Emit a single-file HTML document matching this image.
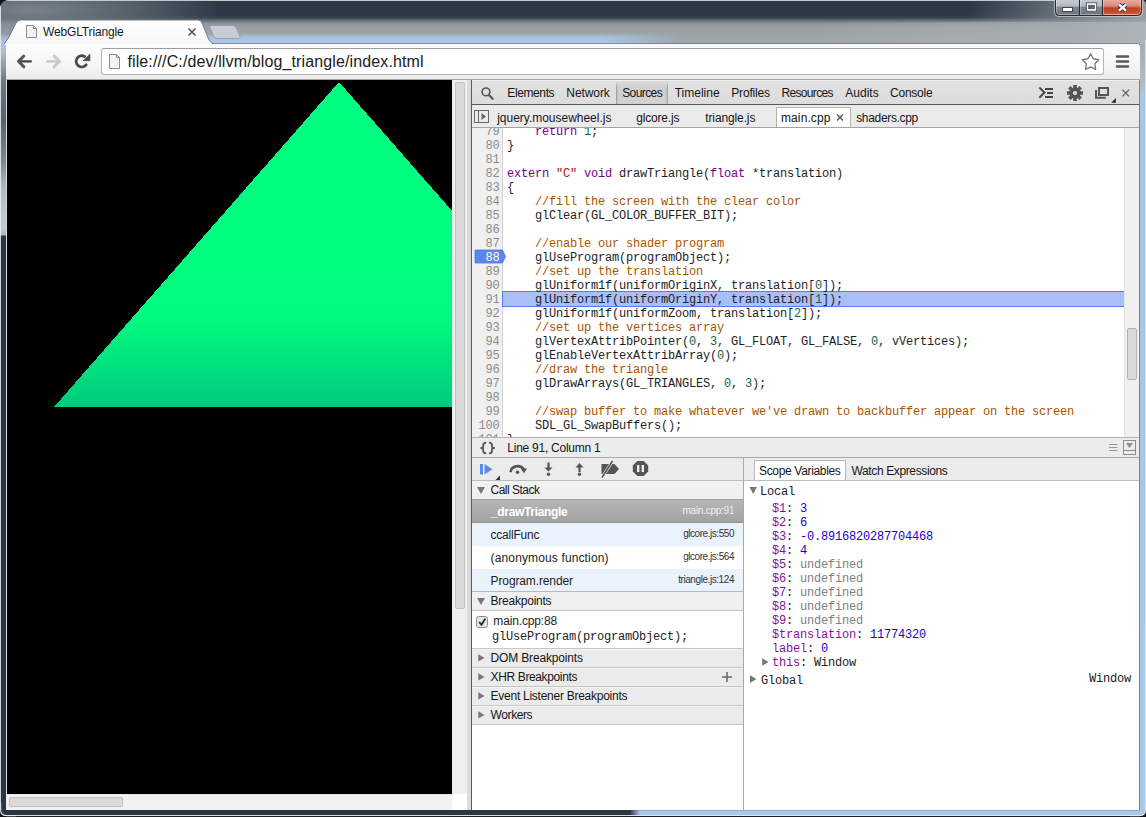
<!DOCTYPE html>
<html><head><meta charset="utf-8">
<style>
*{margin:0;padding:0;box-sizing:border-box}
html,body{width:1146px;height:817px;overflow:hidden;background:#2b3643;position:relative;font-family:"Liberation Sans",sans-serif;font-size:12px;color:#222}
.a{position:absolute}
.mono{font-family:"Liberation Mono",monospace;font-size:11.67px;white-space:pre;line-height:14px}
.m{font-family:'Liberation Mono',monospace;font-size:12px;letter-spacing:-0.2012px;white-space:pre;line-height:normal}
.tx{white-space:pre;line-height:normal;transform-origin:0 0}
.ui{font-family:"Liberation Sans",sans-serif;white-space:pre}
</style></head><body>
<!-- window frame titlebar -->
<div class="a" id="titlebar" style="left:0;top:0;width:1146px;height:46px;background:linear-gradient(to bottom,#5a6570 0,#2e3a47 1px,#2d3946 15px,#3a4551 18px,#6f787f 21px,#8f979c 24px,#9aa1a5 28px,#9ea5a9 36px,#a1a8ac 44px)"></div>
<div class="a" style="left:0;top:0;width:700px;height:46px;background:linear-gradient(to bottom,rgba(169,198,232,0) 0,rgba(169,198,232,0) 33px,rgba(169,198,232,1) 38px,rgba(169,198,232,1) 46px);-webkit-mask-image:linear-gradient(to right,#000 0,#000 600px,transparent 680px)"></div>
<div class="a" style="left:0;top:0;width:260px;height:46px;background:radial-gradient(ellipse 190px 34px at 30px 10px,rgba(125,134,142,0.95),rgba(125,134,142,0.5) 55%,rgba(125,134,142,0) 100%)"></div>
<div class="a" style="left:820px;top:0;width:326px;height:46px;background:linear-gradient(110deg,rgba(140,150,158,0) 0,rgba(140,150,158,0) 45%,rgba(150,158,165,0.75) 80%,rgba(165,172,178,0.9) 100%)"></div>
<div class="a" style="left:820px;top:22px;width:326px;height:24px;background:linear-gradient(to right,rgba(176,182,186,0) 0,rgba(176,182,186,0.8) 100%)"></div>
<div class="a" style="left:3px;top:0;width:1053px;height:1px;background:rgba(215,220,225,0.85)"></div>
<!-- left frame -->
<div class="a" style="left:0;top:44px;width:7px;height:773px;background:linear-gradient(to bottom,#a7c3e1 0,#a9bfd5 8px,#9ea3a8 18px,#6f7984 36px,#56616c 76px,#7b8690 116px,#b4bcc3 146px,#c3cad0 184px,#b0b8bf 191px,#2b3643 192px,#2b3643 773px)"></div>
<div class="a" style="left:0;top:0;width:1px;height:812px;background:rgba(235,238,241,0.85)"></div>
<svg class="a" style="left:0;top:0" width="10" height="10"><path d="M0,0 L8,0 Q1.5,0.5 0,7Z" fill="#0e1116"/></svg>
<!-- right frame -->
<div class="a" style="left:1139px;top:44px;width:7px;height:773px;background:linear-gradient(to bottom,#a6adb1 0,#b3b9bd 36px,#abc6e4 52px,#a9c8ec 773px)"></div>
<div class="a" style="left:1139px;top:44px;width:1px;height:766px;background:#6f8296"></div>
<!-- bottom frame -->
<div class="a" style="left:0;top:810px;width:1146px;height:7px;background:linear-gradient(to right,#2b3643 0,#2b3643 630px,#a9c8ec 640px,#a9c8ec 1146px)"></div>
<div class="a" style="left:0;top:815px;width:1146px;height:1px;background:rgba(225,230,235,0.95)"></div>
<div class="a" style="left:0;top:816px;width:1146px;height:1px;background:#1a1f26"></div>
<div class="a" style="left:1145px;top:40px;width:1px;height:770px;background:rgba(220,232,245,0.9)"></div>
<div class="a" style="left:632px;top:810px;width:508px;height:1px;background:rgba(110,130,150,0.45)"></div>
<svg class="a" style="left:1130px;top:803px" width="16" height="14"><path d="M16,0 L16,14 L0,14 L0,13.3 L9,13.3 Q15.3,13.3 15.3,7 L15.3,0Z" fill="#0e1116"/><path d="M15.4,0 L15.4,7 Q15.4,12.6 9,12.6 L0,12.6" fill="none" stroke="rgba(225,232,240,0.95)" stroke-width="1.2"/></svg>
<svg class="a" style="left:0;top:803px" width="16" height="14"><path d="M0,0 L0,14 L16,14 L16,13.3 L7,13.3 Q0.7,13.3 0.7,7 L0.7,0Z" fill="#0e1116"/><path d="M0.6,0 L0.6,7 Q0.6,12.6 7,12.6 L16,12.6" fill="none" stroke="rgba(225,230,235,0.95)" stroke-width="1.2"/></svg>

<!-- tab -->
<svg class="a" style="left:0;top:0" width="260" height="46">
  <defs><linearGradient id="tabg" x1="0" y1="0" x2="0" y2="1"><stop offset="0" stop-color="#ffffff"/><stop offset="1" stop-color="#f7f7f7"/></linearGradient></defs>
  <path d="M4,45 L6,41 Q8,39 9,37 L16,23 Q18,20 21,20 L198,20 Q201,20 202,23 L209,40 Q211,43 214,45 Z" fill="url(#tabg)"/>
  <path d="M4,44.5 L6,41 Q8,39 9,37 L16,23 Q18,20 21,20 L198,20 Q201,20 202,23 L209,40 Q211,43 214,44.5" fill="none" stroke="#5b6670" stroke-width="0.8"/>
  <path d="M210,25.5 L233,25.5 Q235,25.5 236,27.5 L240,36.5 Q240.5,38.5 238.5,38.5 L216,38.5 Q214.5,38.5 214,37 L210,27.5 Q209.5,25.5 210,25.5Z" fill="#c7cdd4" stroke="#8894a0" stroke-width="0.7"/>
  <!-- page icon -->
  <path d="M26.5,25.5 L33.5,25.5 L36.5,28.5 L36.5,37.5 L26.5,37.5 Z" fill="#f2f2f2" stroke="#8a8a8a" stroke-width="1"/>
  <path d="M33.5,25.5 L33.5,28.5 L36.5,28.5" fill="none" stroke="#8a8a8a" stroke-width="1"/>
  <!-- close x -->
  <path d="M188.5,28.5 L195.5,35.5 M195.5,28.5 L188.5,35.5" stroke="#505050" stroke-width="1.5"/>
</svg>

<!-- caption buttons -->
<svg class="a" style="left:1050px;top:0" width="96" height="20">
  <defs>
    <linearGradient id="cbg" x1="0" y1="0" x2="0" y2="1"><stop offset="0" stop-color="#c9ced3"/><stop offset="0.42" stop-color="#b4bac0"/><stop offset="0.5" stop-color="#7d8690"/><stop offset="1" stop-color="#6d7680"/></linearGradient>
    <linearGradient id="crg" x1="0" y1="0" x2="0" y2="1"><stop offset="0" stop-color="#e9b0a4"/><stop offset="0.42" stop-color="#d98b7a"/><stop offset="0.55" stop-color="#c4401f"/><stop offset="0.85" stop-color="#c8502f"/><stop offset="1" stop-color="#df8a70"/></linearGradient>
  </defs>
  <path d="M4.5,-1 L4.5,12 Q4.5,16.5 9,16.5 L88,16.5 Q92.5,16.5 92.5,12 L92.5,-1" fill="none" stroke="rgba(255,255,255,0.45)" stroke-width="1"/>
  <path d="M5.5,-1 L5.5,11.5 Q5.5,15.5 9.5,15.5 L29.5,15.5 L29.5,-1Z" fill="url(#cbg)"/>
  <path d="M29.5,-1 L29.5,15.5 L52.5,15.5 L52.5,-1Z" fill="url(#cbg)"/>
  <path d="M52.5,-1 L52.5,15.5 L87.5,15.5 Q91.5,15.5 91.5,11.5 L91.5,-1Z" fill="url(#crg)"/>
  <path d="M6.5,-1 L6.5,11.5 Q6.5,14.5 9.5,14.5 L28.5,14.5 M30.5,14.5 L51.5,14.5 M53.5,14.5 L87.5,14.5 Q90.5,14.5 90.5,11.5 L90.5,-1 M30.5,-1 L30.5,14.5 M53.5,-1 L53.5,14.5" fill="none" stroke="rgba(255,255,255,0.35)" stroke-width="1"/>
  <path d="M5.5,-1 L5.5,11.5 Q5.5,15.5 9.5,15.5 L87.5,15.5 Q91.5,15.5 91.5,11.5 L91.5,-1 M29.5,0 L29.5,15.5 M52.5,0 L52.5,15.5" fill="none" stroke="#262b31" stroke-width="1"/>
  <rect x="12.5" y="7.5" width="10" height="4" fill="#fff" stroke="#3e4650" stroke-width="1"/>
  <rect x="36.3" y="2.8" width="10.4" height="8.4" fill="#fff" stroke="#3e4650" stroke-width="0.8"/>
  <rect x="38.6" y="5.2" width="5.8" height="3.6" fill="#5b6470" stroke="#3e4650" stroke-width="0.6"/>
  <path d="M69,4.6 L76,10.6 M76,4.6 L69,10.6" stroke="#3b3a40" stroke-width="4.4" stroke-linecap="butt"/>
  <path d="M69,4.6 L76,10.6 M76,4.6 L69,10.6" stroke="#fff" stroke-width="2.4" stroke-linecap="butt"/>
  <path d="M92,0 Q96,0 96,5 L96,0Z" fill="#111"/>
</svg>
<!-- toolbar -->
<div class="a" style="left:212px;top:43px;width:926px;height:1px;background:rgba(85,100,115,0.55)"></div>
<div class="a" style="left:6px;top:44px;width:1134px;height:36px;border-radius:3px 3px 0 0;background:linear-gradient(to bottom,#fdfdfd 0,#f6f6f6 20px,#ebebeb 35px);border-bottom:1px solid #a7a7a7"></div>
<!-- omnibox -->
<div class="a" style="left:101px;top:48px;width:1003px;height:27px;border-radius:3px;background:#fff;border:1px solid #b4b4b4;border-top-color:#9c9c9c"></div>
<svg class="a" style="left:0;top:44px" width="140" height="36">
  <!-- back -->
  <path d="M18.8,17.4 L30.8,17.4" stroke="#444" stroke-width="2.3" stroke-linecap="round"/>
  <path d="M23.8,12 L18.6,17.4 L23.8,22.8" fill="none" stroke="#555" stroke-width="3" stroke-linecap="round" stroke-linejoin="round"/>
  <!-- forward -->
  <path d="M47.2,17.4 L59,17.4" stroke="#c6c6c6" stroke-width="2.3" stroke-linecap="round"/>
  <path d="M54.2,12 L59.4,17.4 L54.2,22.8" fill="none" stroke="#cacaca" stroke-width="3" stroke-linecap="round" stroke-linejoin="round"/>
  <!-- reload -->
  <path d="M86.1,20.9 A5.6,5.6 0 1 1 84.6,12.45" fill="none" stroke="#4a4a4a" stroke-width="2.9" stroke-linecap="round"/>
  <path d="M90,10 L90,16.7 L83,16.7 Z" fill="#4a4a4a" stroke="#4a4a4a" stroke-width="0.6" stroke-linejoin="round"/>
  <!-- page icon -->
  <path d="M109.5,10.5 L116.5,10.5 L119.5,13.5 L119.5,24.5 L109.5,24.5 Z" fill="#f4f4f4" stroke="#8c8c8c" stroke-width="1"/>
  <path d="M116.5,10.5 L116.5,13.5 L119.5,13.5" fill="none" stroke="#8c8c8c" stroke-width="1"/>
</svg>
<svg class="a" style="left:1075px;top:48px" width="64" height="28">
  <path d="M15.60,5.80 L18.25,10.76 L23.78,11.74 L19.88,15.79 L20.65,21.36 L15.60,18.90 L10.55,21.36 L11.32,15.79 L7.42,11.74 L12.95,10.76Z" fill="#fff" stroke="#7a7a7a" stroke-width="1.35" stroke-linejoin="round"/>
  <path d="M42,8.5 L53,8.5 M42,13.5 L53,13.5 M42,18.5 L53,18.5" stroke="#5a5a5a" stroke-width="2.6" stroke-linecap="round"/>
</svg>

<!-- page content -->
<div class="a" style="left:6px;top:80px;width:1px;height:714px;background:#d6dadd"></div>
<div class="a" style="left:7px;top:80px;width:445px;height:714px;background:#000"></div>
<svg class="a" style="left:7px;top:80px" width="445" height="714">
  <defs><linearGradient id="trg" gradientUnits="userSpaceOnUse" x1="0" y1="0" x2="0" y2="327"><stop offset="0" stop-color="#00ff80"/><stop offset="0.72" stop-color="#00fd7f"/><stop offset="1" stop-color="#00ca7c"/></linearGradient></defs>
  <path d="M332,2 L617,327 L47,327 Z" fill="url(#trg)" shape-rendering="crispEdges"/>
</svg>
<!-- page scrollbars -->
<div class="a" style="left:452px;top:80px;width:15px;height:714px;background:#f0f0f0;border-left:1px solid #e6e6e6"></div>
<div class="a" style="left:455px;top:82px;width:10px;height:527px;background:#dadada;border:1px solid #c2c2c2;border-radius:2px"></div>
<div class="a" style="left:6px;top:794px;width:446px;height:16px;background:#f1f1f1;border-top:1px solid #e6e6e6"></div>
<div class="a" style="left:9px;top:797px;width:114px;height:10px;background:#dadada;border:1px solid #c2c2c2;border-radius:2px"></div>
<div class="a" style="left:452px;top:794px;width:15px;height:16px;background:#fff"></div>
<div class="a" style="left:467px;top:80px;width:4px;height:730px;background:#dcdcdc"></div>
<div class="a" style="left:471px;top:80px;width:1px;height:730px;background:#5a5a5a"></div>

<!-- devtools -->
<div class="a" style="left:472px;top:80px;width:667px;height:730px;background:#fff"></div>
<!-- DT toolbar -->
<div class="a" style="left:472px;top:80px;width:667px;height:25px;background:linear-gradient(#f0f0f0 0,#f0f0f0 1px,#e1e1e1 1px,#dcdcdc 24px);border-bottom:1px solid #575757"></div>
<div class="a" style="left:616px;top:81px;width:52px;height:23px;background:linear-gradient(#d6d6d6,#cfcfcf 50%,#d3d3d3);-webkit-mask-image:linear-gradient(rgba(0,0,0,.6),#000 4px)"></div>
<div class="a" style="left:616px;top:82px;width:52px;height:22px;box-shadow:inset 1px 0 1px rgba(0,0,0,0.18),inset -1px 0 1px rgba(0,0,0,0.18),inset 3px 0 3px -2px rgba(0,0,0,0.12),inset -3px 0 3px -2px rgba(0,0,0,0.12);-webkit-mask-image:linear-gradient(transparent,#000 5px)"></div>
<svg class="a" style="left:472px;top:80px" width="667" height="25">
  <circle cx="14" cy="11.9" r="3.9" fill="none" stroke="#555" stroke-width="1.6"/>
  <path d="M16.9,14.9 L20.6,18.8" stroke="#555" stroke-width="2.2" stroke-linecap="round"/>
  <!-- console drawer >= -->
  <path d="M567.3,7.5 L572.5,12.5 L567.3,17.8" fill="none" stroke="#4a4a4a" stroke-width="2" stroke-linejoin="miter"/>
  <path d="M573,9 L581,9 M575,13 L581,13 M573,17 L581,17" stroke="#444" stroke-width="1.8"/>
  <!-- gear -->
  <g transform="translate(603,13)">
    <circle r="5.6" fill="#555"/>
    <g fill="#555">
      <rect x="-1.8" y="-8" width="3.6" height="16" />
      <rect x="-1.8" y="-8" width="3.6" height="16" transform="rotate(45)"/>
      <rect x="-1.8" y="-8" width="3.6" height="16" transform="rotate(90)"/>
      <rect x="-1.8" y="-8" width="3.6" height="16" transform="rotate(135)"/>
    </g>
    <circle r="2.1" fill="#dfdfdf"/>
  </g>
  <!-- dock icon -->
  <rect x="627" y="8" width="9" height="7" fill="none" stroke="#555" stroke-width="2"/>
  <path d="M624,10 L624,17.75 L633.8,17.75" fill="none" stroke="#555" stroke-width="2"/>
  <path d="M639.2,22.7 L643.9,18 L643.9,22.7 Z" fill="#222"/>
  <!-- close -->
  <path d="M650.5,9.8 L657,16.4 M657,9.8 L650.5,16.4" stroke="#666" stroke-width="1.3"/>
</svg>
<!-- source tabs row -->
<div class="a" style="left:472px;top:105px;width:667px;height:23px;background:#ebebeb;border-bottom:1px solid #a3a3a3"></div>
<div class="a" style="left:776px;top:107px;width:75px;height:20px;background:#fff;border:1px solid #b4b4b4;border-bottom:none"></div>
<svg class="a" style="left:472px;top:105px" width="400" height="23">
  <rect x="2.5" y="5.5" width="14" height="12" fill="none" stroke="#666" stroke-width="1"/>
  <path d="M6.5,5.5 L6.5,17.5" stroke="#666" stroke-width="1"/>
  <path d="M9.5,8 L14,11.5 L9.5,15 Z" fill="#666"/>
  <path d="M365,9.4 L371,15.4 M371,9.4 L365,15.4" stroke="#555" stroke-width="1.4"/>
</svg>
<!-- code area -->
<div class="a" style="left:472px;top:128px;width:31px;height:309px;background:#f0f0f0;border-right:1px solid #d2d2d2"></div>
<!-- breakpoint marker line 88 -->
<svg class="a" style="left:472px;top:248px" width="40" height="18">
  <path d="M3,2 L30.5,2 L33.5,8.5 L30.5,15 L3,15 Z" fill="#5b86ee" stroke="#4a78e6" stroke-width="0.8"/>
</svg>
<!-- highlight line 91 -->
<div class="a" style="left:502px;top:291px;width:622px;height:16px;background:#aabff8;border:1px solid #4f7ee8;border-right:none"></div>
<!-- code scrollbar -->
<div class="a" style="left:1124px;top:128px;width:15px;height:309px;background:#f0f0f0;border-left:1px solid #e4e4e4"></div>
<div class="a" style="left:1127px;top:328px;width:10px;height:52px;background:#d9d9d9;border:1px solid #b4b4b4;border-radius:2px"></div>
<!-- status bar -->
<div class="a" style="left:472px;top:437px;width:667px;height:21px;background:#ececec;border-top:1px solid #b3b3b3;border-bottom:1px solid #a9a9a9"></div>
<svg class="a" style="left:472px;top:437px" width="667" height="21">
  <path d="M14.2,5.6 Q11.2,5.6 11.2,8.2 L11.2,9.6 Q11.2,11 8.4,11 Q11.2,11 11.2,12.4 L11.2,13.8 Q11.2,16.4 14.2,16.4 M17,5.6 Q20,5.6 20,8.2 L20,9.6 Q20,11 22.8,11 Q20,11 20,12.4 L20,13.8 Q20,16.4 17,16.4" fill="none" stroke="#555" stroke-width="1.8"/>
  <path d="M637,7.5 L645.5,7.5 M637,10.5 L645.5,10.5 M637,13.5 L645.5,13.5" stroke="#999" stroke-width="1.1"/>
  <rect x="651.5" y="3.5" width="12" height="14" fill="none" stroke="#8c8c8c" stroke-width="1"/>
  <path d="M651.5,13.5 L663.5,13.5" stroke="#8c8c8c" stroke-width="1"/>
  <path d="M654,6 L661,6 L657.5,11 Z" fill="#8c8c8c"/>
</svg>
<!-- debug toolbar + right tabs -->
<div class="a" style="left:472px;top:458px;width:667px;height:23px;background:#ebebeb;border-bottom:1px solid #bdbdbd"></div>
<div class="a" style="left:743px;top:458px;width:1px;height:352px;background:#a8a8a8"></div>
<svg class="a" style="left:472px;top:458px" width="272" height="23">
  <!-- resume -->
  <rect x="8" y="6" width="3" height="10.5" fill="#5a8ce8"/>
  <path d="M12.5,6 L20.5,11.2 L12.5,16.5 Z" fill="#5a8ce8"/>
  <path d="M23.5,22 L28,17.5 L28,22 Z" fill="#333"/>
  <!-- step over -->
  <path d="M38.6,14.2 A7,6.2 0 0 1 51.6,11.2" fill="none" stroke="#555" stroke-width="2.6"/>
  <path d="M48.6,10.6 L55,10.6 L52,15.2 Z" fill="#555"/>
  <circle cx="45.5" cy="14.3" r="1.8" fill="#555"/>
  <!-- step into -->
  <path d="M76.5,4.5 L76.5,11" stroke="#555" stroke-width="2.2"/>
  <path d="M72.5,9.5 L80.5,9.5 L76.5,13.5 Z" fill="#555"/>
  <circle cx="76.5" cy="16.3" r="1.7" fill="#555"/>
  <!-- step out -->
  <path d="M107.5,9 L107.5,14" stroke="#555" stroke-width="2.2"/>
  <path d="M103.5,9.5 L111.5,9.5 L107.5,5 Z" fill="#555"/>
  <circle cx="107.5" cy="16.3" r="1.7" fill="#555"/>
  <!-- deactivate -->
  <path d="M129.5,6 L142.5,6 L147,11 L142.5,16 L129.5,16 Z" fill="#555"/>
  <path d="M129.5,20 L141,2.5" stroke="#ebebeb" stroke-width="3"/>
  <path d="M130,19.5 L140.5,3" stroke="#555" stroke-width="1.6"/>
  <!-- pause on exceptions -->
  <path d="M165.3,3 L171.7,3 L176.2,7.5 L176.2,13.5 L171.7,18 L165.3,18 L160.8,13.5 L160.8,7.5 Z" fill="#555"/>
  <rect x="165" y="7" width="2.4" height="7" fill="#ebebeb"/>
  <rect x="169.6" y="7" width="2.4" height="7" fill="#ebebeb"/>
</svg>
<!-- scope tab -->
<div class="a" style="left:754px;top:460px;width:92px;height:20px;background:#fff;border:1px solid #b8b8b8;border-bottom:none"></div>
<!-- call stack -->
<div class="a" style="left:472px;top:481px;width:271px;height:18px;background:linear-gradient(#f2f2f2,#eeeeee)"></div>
<div class="a" style="left:472px;top:499px;width:271px;height:24px;background:linear-gradient(#b6b6b6,#a2a2a2);border-top:1px solid #9e9e9e;border-bottom:1px solid #969696"></div>
<div class="a" style="left:472px;top:523px;width:271px;height:23px;background:#eaf2fd"></div>
<div class="a" style="left:472px;top:546px;width:271px;height:23px;background:#fff"></div>
<div class="a" style="left:472px;top:569px;width:271px;height:22px;background:#eaf2fd"></div>
<!-- breakpoints -->
<div class="a" style="left:472px;top:591px;width:271px;height:20px;background:#f0f0f0;border-top:1px solid #b9b9b9;border-bottom:1px solid #c4c4c4"></div>
<div class="a" style="left:472px;top:648px;width:271px;height:77px;background:repeating-linear-gradient(#c6c6c6 0,#c6c6c6 1px,#f4f4f4 1px,#f4f4f4 2px,#ebebeb 2px,#ebebeb 19px)"></div>
<svg class="a" style="left:472px;top:480px" width="272" height="260">
  <path d="M5,7 L13,7 L9,14 Z" fill="#777"/>
  <path d="M5,118 L13,118 L9,125 Z" fill="#777"/>
  <rect x="4.5" y="136.5" width="11" height="11" rx="2" fill="#e4e4e4" stroke="#8e8e8e" stroke-width="1"/>
  <path d="M7.2,142 L9.5,144.8 L13.3,138.6" fill="none" stroke="#222" stroke-width="1.7"/>
  <path d="M6.3,174.3 L12.5,177.9 L6.3,181.5 Z" fill="#777"/>
  <path d="M6.3,193.3 L12.5,196.9 L6.3,200.5 Z" fill="#777"/>
  <path d="M6.3,212.3 L12.5,215.9 L6.3,219.5 Z" fill="#777"/>
  <path d="M6.3,231.3 L12.5,234.9 L6.3,238.5 Z" fill="#777"/>
  <path d="M255,192 L255,202 M250,197 L260,197" stroke="#666" stroke-width="1.5"/>
</svg>
<!-- scope triangles -->
<svg class="a" style="left:744px;top:480px" width="30" height="210">
  <path d="M5.5,7 L13,7 L9.2,14 Z" fill="#777"/>
  <path d="M18.2,178.2 L24.5,182 L18.2,185.8 Z" fill="#777"/>
  <path d="M6,195.3 L12.5,199.1 L6,202.9 Z" fill="#777"/>
</svg>

<!-- code -->
<div class="a" style="left:472px;top:128px;width:652px;height:309px;overflow:hidden">
<div class="a m" style="left:13.5px;top:-3px;color:#8c8c8c">79</div>
<div class="a m" style="left:35px;top:-3px;color:#1e1e1e">    <span style="color:#770088">return</span> <span style="color:#116644">1</span>;</div>
<div class="a m" style="left:13.5px;top:11px;color:#8c8c8c">80</div>
<div class="a m" style="left:35px;top:11px;color:#1e1e1e">}</div>
<div class="a m" style="left:13.5px;top:25px;color:#8c8c8c">81</div>
<div class="a m" style="left:13.5px;top:39px;color:#8c8c8c">82</div>
<div class="a m" style="left:35px;top:39px;color:#1e1e1e"><span style="color:#770088">extern</span> <span style="color:#aa1111">&quot;C&quot;</span> <span style="color:#770088">void</span> drawTriangle(<span style="color:#770088">float</span> *translation)</div>
<div class="a m" style="left:13.5px;top:53px;color:#8c8c8c">83</div>
<div class="a m" style="left:35px;top:53px;color:#1e1e1e">{</div>
<div class="a m" style="left:13.5px;top:67px;color:#8c8c8c">84</div>
<div class="a m" style="left:35px;top:67px;color:#1e1e1e"><span style="color:#aa5500">    //fill the screen with the clear color</span></div>
<div class="a m" style="left:13.5px;top:81px;color:#8c8c8c">85</div>
<div class="a m" style="left:35px;top:81px;color:#1e1e1e">    glClear(GL_COLOR_BUFFER_BIT);</div>
<div class="a m" style="left:13.5px;top:95px;color:#8c8c8c">86</div>
<div class="a m" style="left:13.5px;top:109px;color:#8c8c8c">87</div>
<div class="a m" style="left:35px;top:109px;color:#1e1e1e"><span style="color:#aa5500">    //enable our shader program</span></div>
<div class="a m" style="left:13.5px;top:123px;color:#fff">88</div>
<div class="a m" style="left:35px;top:123px;color:#1e1e1e">    glUseProgram(programObject);</div>
<div class="a m" style="left:13.5px;top:137px;color:#8c8c8c">89</div>
<div class="a m" style="left:35px;top:137px;color:#1e1e1e"><span style="color:#aa5500">    //set up the translation</span></div>
<div class="a m" style="left:13.5px;top:151px;color:#8c8c8c">90</div>
<div class="a m" style="left:35px;top:151px;color:#1e1e1e">    glUniform1f(uniformOriginX, translation[<span style="color:#116644">0</span>]);</div>
<div class="a m" style="left:13.5px;top:165px;color:#8c8c8c">91</div>
<div class="a m" style="left:35px;top:165px;color:#1e1e1e">    glUniform1f(uniformOriginY, translation[<span style="color:#116644">1</span>]);</div>
<div class="a m" style="left:13.5px;top:179px;color:#8c8c8c">92</div>
<div class="a m" style="left:35px;top:179px;color:#1e1e1e">    glUniform1f(uniformZoom, translation[<span style="color:#116644">2</span>]);</div>
<div class="a m" style="left:13.5px;top:193px;color:#8c8c8c">93</div>
<div class="a m" style="left:35px;top:193px;color:#1e1e1e"><span style="color:#aa5500">    //set up the vertices array</span></div>
<div class="a m" style="left:13.5px;top:207px;color:#8c8c8c">94</div>
<div class="a m" style="left:35px;top:207px;color:#1e1e1e">    glVertexAttribPointer(<span style="color:#116644">0</span>, <span style="color:#116644">3</span>, GL_FLOAT, GL_FALSE, <span style="color:#116644">0</span>, vVertices);</div>
<div class="a m" style="left:13.5px;top:221px;color:#8c8c8c">95</div>
<div class="a m" style="left:35px;top:221px;color:#1e1e1e">    glEnableVertexAttribArray(<span style="color:#116644">0</span>);</div>
<div class="a m" style="left:13.5px;top:235px;color:#8c8c8c">96</div>
<div class="a m" style="left:35px;top:235px;color:#1e1e1e"><span style="color:#aa5500">    //draw the triangle</span></div>
<div class="a m" style="left:13.5px;top:249px;color:#8c8c8c">97</div>
<div class="a m" style="left:35px;top:249px;color:#1e1e1e">    glDrawArrays(GL_TRIANGLES, <span style="color:#116644">0</span>, <span style="color:#116644">3</span>);</div>
<div class="a m" style="left:13.5px;top:263px;color:#8c8c8c">98</div>
<div class="a m" style="left:13.5px;top:277px;color:#8c8c8c">99</div>
<div class="a m" style="left:35px;top:277px;color:#1e1e1e"><span style="color:#aa5500">    //swap buffer to make whatever we&#x27;ve drawn to backbuffer appear on the screen</span></div>
<div class="a m" style="left:6.5px;top:291px;color:#8c8c8c">100</div>
<div class="a m" style="left:35px;top:291px;color:#1e1e1e">    SDL_GL_SwapBuffers();</div>
<div class="a m" style="left:6.5px;top:305px;color:#8c8c8c">101</div>
<div class="a m" style="left:35px;top:305px;color:#1e1e1e">}</div>
</div>
<!-- scope -->
<div class="a m" style="left:772px;top:502px"><span style="color:#881391">$1</span><span style="color:#222">: </span><span style="color:#1c00cf">3</span></div>
<div class="a m" style="left:772px;top:516px"><span style="color:#881391">$2</span><span style="color:#222">: </span><span style="color:#1c00cf">6</span></div>
<div class="a m" style="left:772px;top:530px"><span style="color:#881391">$3</span><span style="color:#222">: </span><span style="color:#1c00cf">-0.8916820287704468</span></div>
<div class="a m" style="left:772px;top:544px"><span style="color:#881391">$4</span><span style="color:#222">: </span><span style="color:#1c00cf">4</span></div>
<div class="a m" style="left:772px;top:558px"><span style="color:#881391">$5</span><span style="color:#222">: </span><span style="color:#808080">undefined</span></div>
<div class="a m" style="left:772px;top:572px"><span style="color:#881391">$6</span><span style="color:#222">: </span><span style="color:#808080">undefined</span></div>
<div class="a m" style="left:772px;top:586px"><span style="color:#881391">$7</span><span style="color:#222">: </span><span style="color:#808080">undefined</span></div>
<div class="a m" style="left:772px;top:600px"><span style="color:#881391">$8</span><span style="color:#222">: </span><span style="color:#808080">undefined</span></div>
<div class="a m" style="left:772px;top:614px"><span style="color:#881391">$9</span><span style="color:#222">: </span><span style="color:#808080">undefined</span></div>
<div class="a m" style="left:772px;top:628px"><span style="color:#881391">$translation</span><span style="color:#222">: </span><span style="color:#1c00cf">11774320</span></div>
<div class="a m" style="left:772px;top:642px"><span style="color:#881391">label</span><span style="color:#222">: </span><span style="color:#1c00cf">0</span></div>
<div class="a m" style="left:772px;top:656px"><span style="color:#881391">this</span><span style="color:#222">: Window</span></div>
<div class="a m" style="left:761px;top:674px;color:#222">Global</div>
<div class="a m" style="left:1089px;top:672px;color:#222">Window</div>
<!-- texts -->
<div class="a tx" style="left:43.00px;top:24.5px;font-family:'Liberation Sans';font-size:12px;font-weight:400;color:#1a1a1a;letter-spacing:-0.151px;">WebGLTriangle</div>
<div class="a tx" style="left:127.40px;top:53px;font-family:'Liberation Sans';font-size:16px;font-weight:400;color:#202020;letter-spacing:0.125px;">file:///C:/dev/llvm/blog_triangle/index.html</div>
<div class="a tx" style="left:507.30px;top:86px;font-family:'Liberation Sans';font-size:12px;font-weight:400;color:#161616;letter-spacing:-0.389px;">Elements</div>
<div class="a tx" style="left:566.30px;top:86px;font-family:'Liberation Sans';font-size:12px;font-weight:400;color:#161616;letter-spacing:-0.085px;">Network</div>
<div class="a tx" style="left:622.20px;top:86px;font-family:'Liberation Sans';font-size:12px;font-weight:400;color:#161616;letter-spacing:-0.587px;">Sources</div>
<div class="a tx" style="left:674.70px;top:86px;font-family:'Liberation Sans';font-size:12px;font-weight:400;color:#161616;">Timeline</div>
<div class="a tx" style="left:731.30px;top:86px;font-family:'Liberation Sans';font-size:12px;font-weight:400;color:#161616;letter-spacing:-0.188px;">Profiles</div>
<div class="a tx" style="left:781.40px;top:86px;font-family:'Liberation Sans';font-size:12px;font-weight:400;color:#161616;letter-spacing:-0.657px;">Resources</div>
<div class="a tx" style="left:845.20px;top:86px;font-family:'Liberation Sans';font-size:12px;font-weight:400;color:#161616;letter-spacing:0.030px;">Audits</div>
<div class="a tx" style="left:890.00px;top:86px;font-family:'Liberation Sans';font-size:12px;font-weight:400;color:#161616;letter-spacing:-0.226px;">Console</div>
<div class="a tx" style="left:497.20px;top:111px;font-family:'Liberation Sans';font-size:12px;font-weight:400;color:#161616;letter-spacing:-0.016px;">jquery.mousewheel.js</div>
<div class="a tx" style="left:636.20px;top:111px;font-family:'Liberation Sans';font-size:12px;font-weight:400;color:#161616;letter-spacing:-0.185px;">glcore.js</div>
<div class="a tx" style="left:705.30px;top:111px;font-family:'Liberation Sans';font-size:12px;font-weight:400;color:#161616;letter-spacing:-0.126px;">triangle.js</div>
<div class="a tx" style="left:781.00px;top:111px;font-family:'Liberation Sans';font-size:12px;font-weight:400;color:#161616;letter-spacing:0.097px;">main.cpp</div>
<div class="a tx" style="left:856.20px;top:111px;font-family:'Liberation Sans';font-size:12px;font-weight:400;color:#161616;letter-spacing:-0.330px;">shaders.cpp</div>
<div class="a tx" style="left:507.30px;top:441px;font-family:'Liberation Sans';font-size:12px;font-weight:400;color:#161616;letter-spacing:-0.251px;">Line 91, Column 1</div>
<div class="a tx" style="left:490.50px;top:483px;font-family:'Liberation Sans';font-size:12px;font-weight:400;color:#161616;letter-spacing:-0.502px;">Call Stack</div>
<div class="a tx" style="left:491.00px;top:505px;font-family:'Liberation Sans';font-size:12px;font-weight:700;color:#ffffff;letter-spacing:-0.335px;">_drawTriangle</div>
<div class="a tx" style="left:682.50px;top:505px;font-family:'Liberation Sans';font-size:10px;font-weight:400;color:#f0f0f0;letter-spacing:-0.252px;">main.cpp:91</div>
<div class="a tx" style="left:490.60px;top:528px;font-family:'Liberation Sans';font-size:12px;font-weight:400;color:#222;letter-spacing:-0.235px;">ccallFunc</div>
<div class="a tx" style="left:683.20px;top:528px;font-family:'Liberation Sans';font-size:10px;font-weight:400;color:#333;letter-spacing:-0.453px;">glcore.js:550</div>
<div class="a tx" style="left:490.60px;top:551px;font-family:'Liberation Sans';font-size:12px;font-weight:400;color:#222;letter-spacing:0.132px;">(anonymous function)</div>
<div class="a tx" style="left:683.20px;top:551px;font-family:'Liberation Sans';font-size:10px;font-weight:400;color:#333;letter-spacing:-0.453px;">glcore.js:564</div>
<div class="a tx" style="left:490.60px;top:574px;font-family:'Liberation Sans';font-size:12px;font-weight:400;color:#222;letter-spacing:-0.126px;">Program.render</div>
<div class="a tx" style="left:678.20px;top:574px;font-family:'Liberation Sans';font-size:10px;font-weight:400;color:#333;letter-spacing:-0.429px;">triangle.js:124</div>
<div class="a tx" style="left:490.60px;top:594px;font-family:'Liberation Sans';font-size:12px;font-weight:400;color:#161616;letter-spacing:-0.237px;">Breakpoints</div>
<div class="a tx" style="left:493.30px;top:614px;font-family:'Liberation Sans';font-size:12px;font-weight:400;color:#222;letter-spacing:-0.140px;">main.cpp:88</div>
<div class="a tx" style="left:492.00px;top:630px;font-family:'Liberation Mono';font-size:12px;font-weight:400;color:#222;letter-spacing:-0.2012px;">glUseProgram(programObject);</div>
<div class="a tx" style="left:490.60px;top:651px;font-family:'Liberation Sans';font-size:12px;font-weight:400;color:#161616;letter-spacing:-0.164px;">DOM Breakpoints</div>
<div class="a tx" style="left:490.60px;top:670px;font-family:'Liberation Sans';font-size:12px;font-weight:400;color:#161616;letter-spacing:-0.374px;">XHR Breakpoints</div>
<div class="a tx" style="left:490.60px;top:689px;font-family:'Liberation Sans';font-size:12px;font-weight:400;color:#161616;letter-spacing:-0.261px;">Event Listener Breakpoints</div>
<div class="a tx" style="left:490.60px;top:708px;font-family:'Liberation Sans';font-size:12px;font-weight:400;color:#161616;letter-spacing:-0.408px;">Workers</div>
<div class="a tx" style="left:759.00px;top:464px;font-family:'Liberation Sans';font-size:12px;font-weight:400;color:#161616;letter-spacing:-0.335px;">Scope Variables</div>
<div class="a tx" style="left:851.50px;top:464px;font-family:'Liberation Sans';font-size:12px;font-weight:400;color:#161616;letter-spacing:-0.372px;">Watch Expressions</div>
<div class="a tx" style="left:760.00px;top:485px;font-family:'Liberation Mono';font-size:12px;font-weight:400;color:#222;letter-spacing:-0.2012px;">Local</div>
</body></html>
